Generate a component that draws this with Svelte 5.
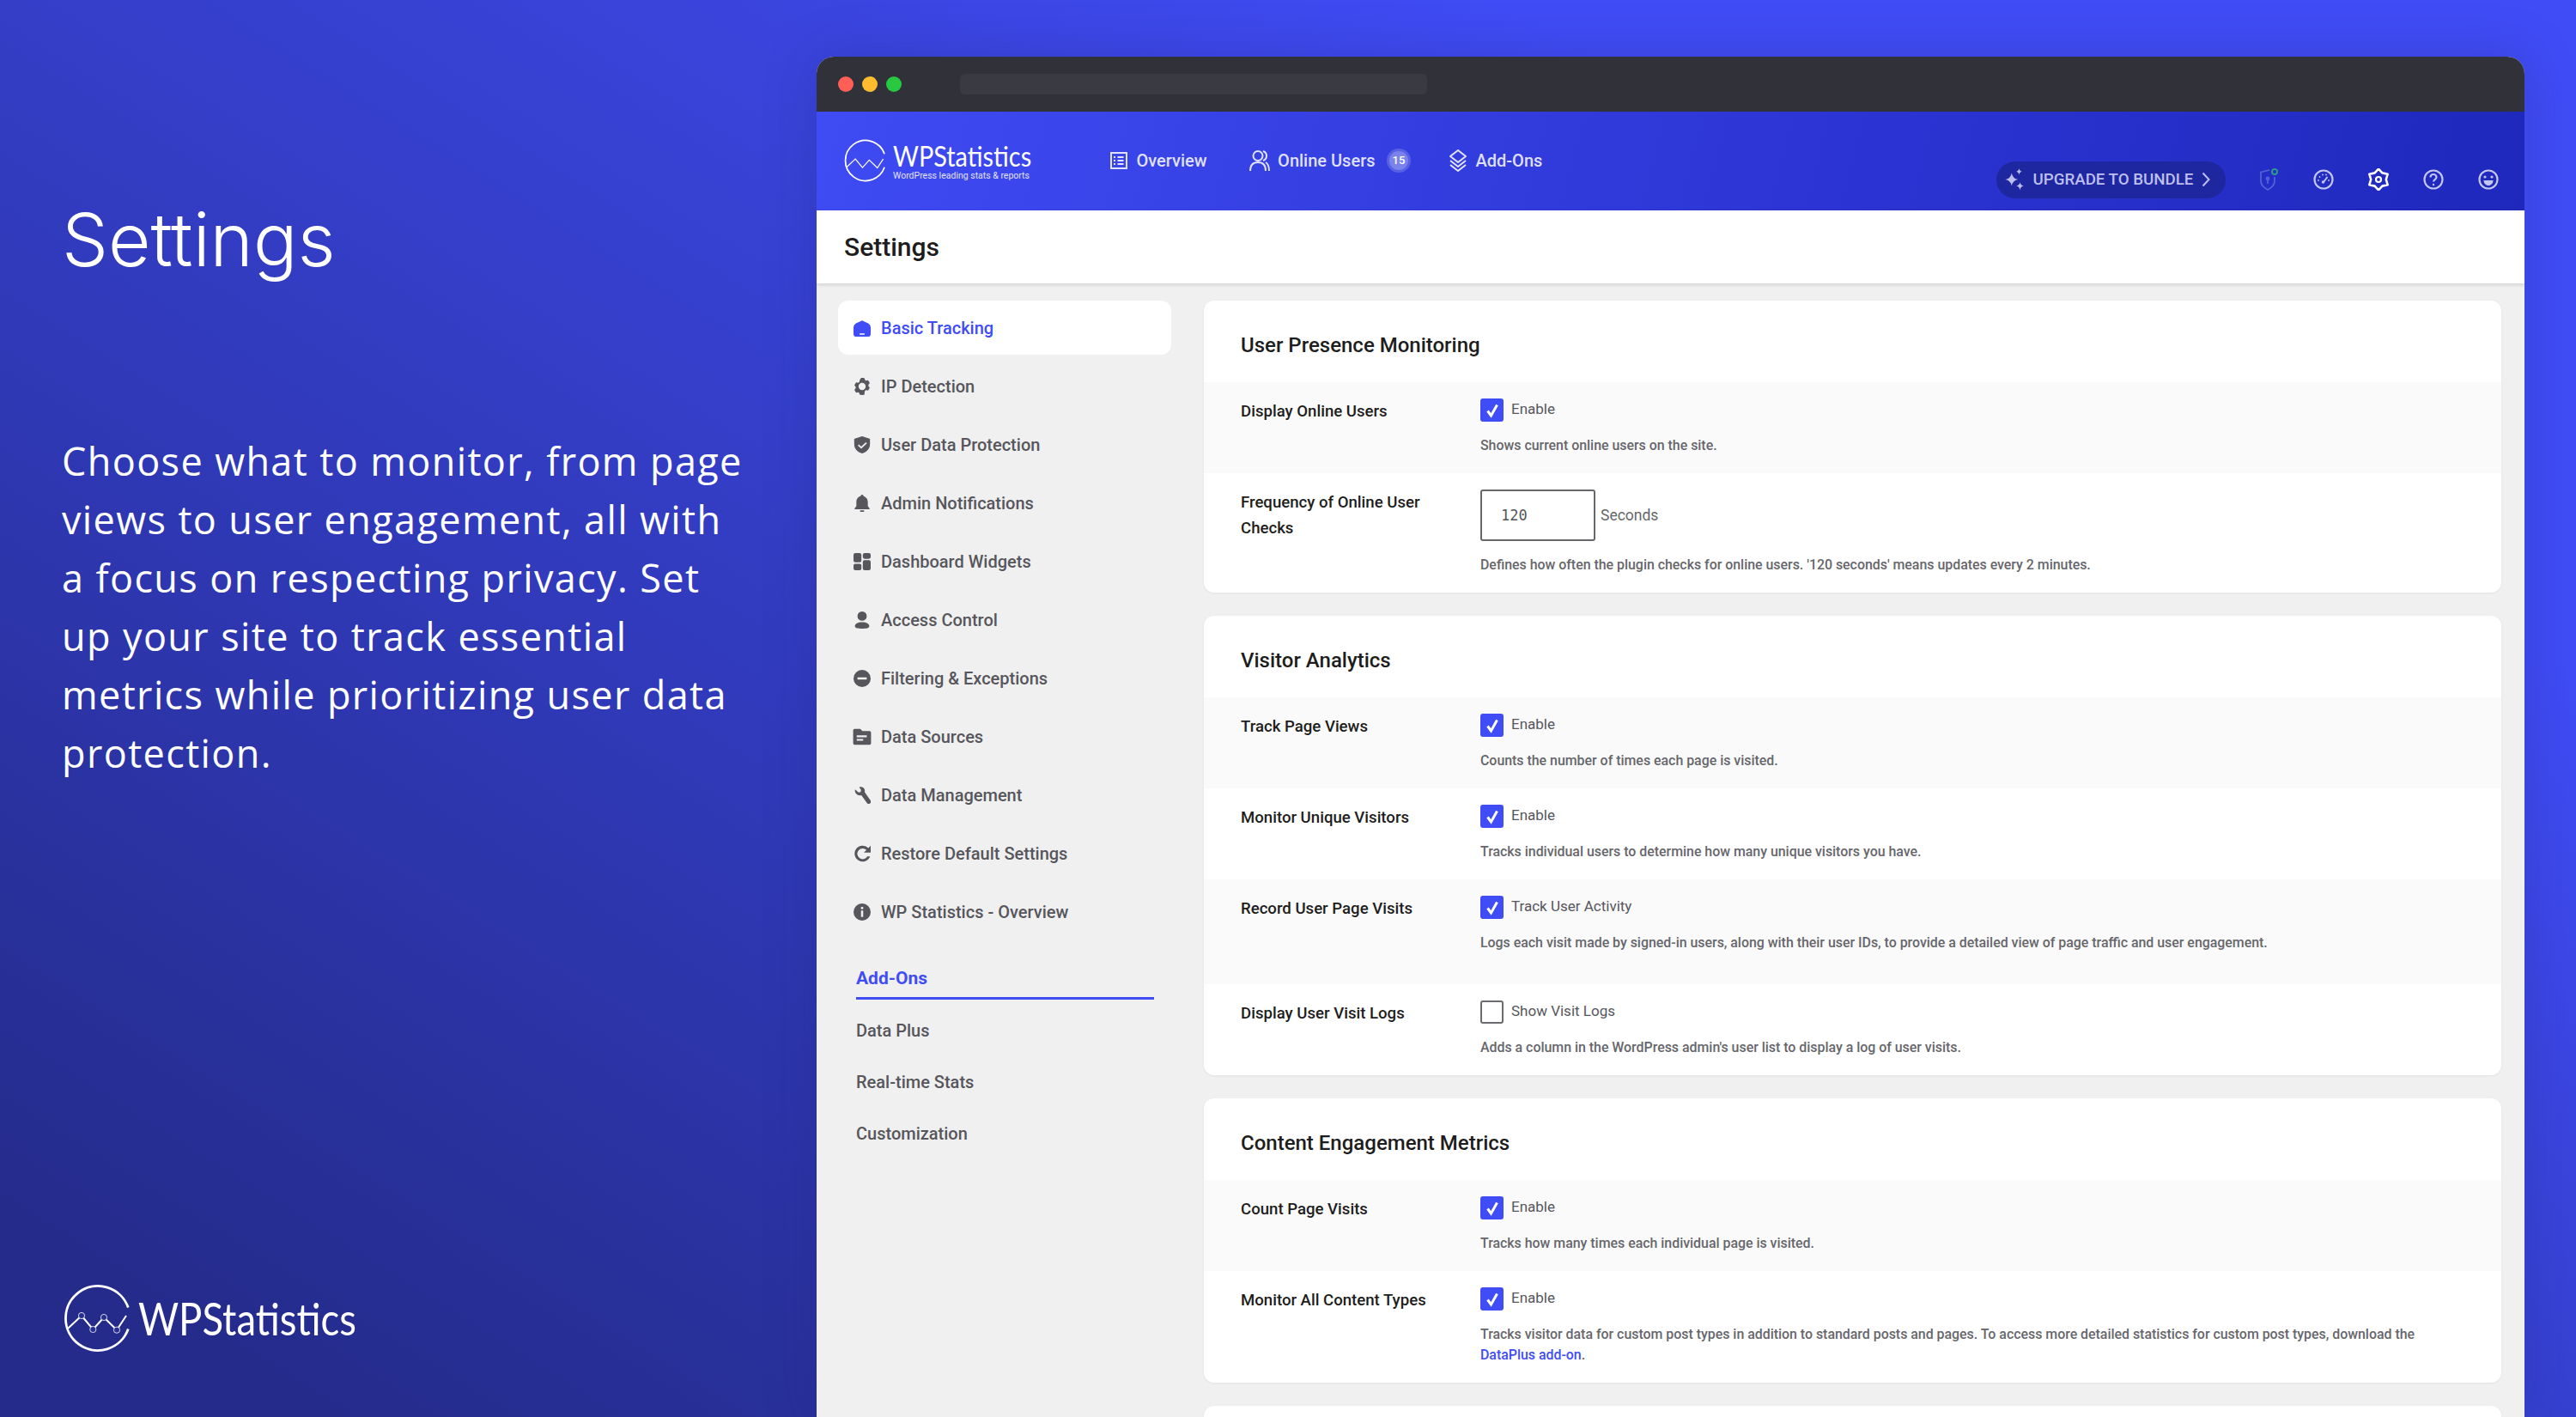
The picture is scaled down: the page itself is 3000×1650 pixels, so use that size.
<script>
  const menu = [
    { name: 'Basic Tracking', icon: 'M12 1.500 20.500 5.500Q24 7.500 24 11V20a4 4 0 0 1-4 4H4a4 4 0 0 1-4-4V11Q0 7.500 3.500 5.500ZM8.500 19.500v1.800h7v-1.800Z', active: true },
    { name: 'IP Detection', icon: 'M12 0c1.200 0 2.300.200 3.400.500l.6 2.500 1.800 1 2.500-.700a12 12 0 0 1 2.400 4.200l-1.800 1.800v2.400l1.800 1.800a12 12 0 0 1-2.400 4.200L17.800 17l-1.800 1-.6 2.500-.100.100L15.400 23.500a12 12 0 0 1-6.800 0L8 21l-1.800-1-2.500.700A12 12 0 0 1 1.300 16.500L3 14.700v-2.400L1.300 10.500A12 12 0 0 1 3.700 6.300L6.200 7 8 6l.6-2.500C9.700 .2 10.800 0 12 0ZM12 7a5 5 0 1 0 0 10 5 5 0 0 0 0-10Z' },
    { name: 'User Data Protection', icon: 'M12 0 23 3.500V11c0 6.500-4.500 11-11 13C5.500 22 1 17.500 1 11V3.500ZM17.200 8.500 10.800 14.500 7.500 11.500 6 13l4.800 4.500 8-7.500Z' },
    { name: 'Admin Notifications', icon: 'M12 0a2 2 0 0 1 2 2.200c3.500 1 6 4 6 8V16l2.500 3.500v1h-21v-1L4 16v-5.800c0-4.200 2.500-7.200 6-8A2 2 0 0 1 12 0ZM9 22h6a3 3 0 0 1-6 0Z' },
    { name: 'Dashboard Widgets', icon: 'M2.500 0h6A2.500 2.500 0 0 1 11 2.500v8A2.500 2.500 0 0 1 8.500 13h-6A2.500 2.500 0 0 1 0 10.500v-8A2.500 2.500 0 0 1 2.500 0ZM15.500 0h6A2.500 2.500 0 0 1 24 2.500v3A2.500 2.500 0 0 1 21.500 8h-6A2.500 2.500 0 0 1 13 5.500v-3A2.500 2.500 0 0 1 15.500 0ZM15.500 10h6a2.500 2.500 0 0 1 2.500 2.500v9a2.500 2.500 0 0 1-2.500 2.500h-6a2.500 2.500 0 0 1-2.500-2.500v-9a2.500 2.500 0 0 1 2.500-2.500ZM2.500 15h6a2.500 2.500 0 0 1 2.500 2.500v4A2.500 2.500 0 0 1 8.500 24h-6A2.500 2.500 0 0 1 0 21.500v-4A2.500 2.500 0 0 1 2.500 15Z' },
    { name: 'Access Control', icon: 'M12 0a6.500 6.500 0 1 1 0 13 6.500 6.500 0 0 1 0-13ZM12 15c6 0 10 2.300 10 5.500S18 24 12 24 2 23.700 2 20.500 6 15 12 15Z' },
    { name: 'Filtering & Exceptions', icon: 'M12 0a12 12 0 1 1 0 24 12 12 0 0 1 0-24ZM5.500 10.500v3h13v-3Z' },
    { name: 'Data Sources', icon: 'M0 3a2 2 0 0 1 2-2h8l3 3h10a2 2 0 0 1 2 2v15a2 2 0 0 1-2 2H2a2 2 0 0 1-2-2ZM5 10v2.500h14V10ZM5 15v2.500h9V15Z', wide: true },
    { name: 'Data Management', icon: 'M8 .5c3-1 6.500.500 7.500 3.500.400 1.300.400 2.500 0 3.600L23.500 19a2.800 2.800 0 0 1-4.500 4L11 12c-3 1-6.500-.500-8-3-1-1.700-1.200-3.500-.8-5L7 8l3-.500.500-3Z' },
    { name: 'Restore Default Settings', icon: 'M24 1v9.500h-9.500l3.600-3.600A7.500 7.500 0 1 0 19.300 16h3.900A11.200 11.200 0 1 1 20.800 4.200Z' },
    { name: 'WP Statistics - Overview', icon: 'M12 0a12 12 0 1 1 0 24 12 12 0 0 1 0-24ZM10.500 10v9h3v-9ZM12 4.500a1.800 1.800 0 1 0 0 3.600 1.800 1.800 0 0 0 0-3.600Z' }
  ];

  const addons = ['Data Plus', 'Real-time Stats', 'Customization'];

  const sections = [
    {
      title: 'User Presence Monitoring',
      rows: [
        { label: 'Display Online Users', check: 'Enable', on: true, desc: 'Shows current online users on the site.' },
        { label: 'Frequency of Online User Checks', input: '120', desc: "Defines how often the plugin checks for online users. '120 seconds' means updates every 2 minutes." }
      ]
    },
    {
      title: 'Visitor Analytics',
      rows: [
        { label: 'Track Page Views', check: 'Enable', on: true, desc: 'Counts the number of times each page is visited.' },
        { label: 'Monitor Unique Visitors', check: 'Enable', on: true, desc: 'Tracks individual users to determine how many unique visitors you have.' },
        { label: 'Record User Page Visits', check: 'Track User Activity', on: true, tall: true, desc: 'Logs each visit made by signed-in users, along with their user IDs, to provide a detailed view of page traffic and user engagement.' },
        { label: 'Display User Visit Logs', check: 'Show Visit Logs', on: false, desc: "Adds a column in the WordPress admin's user list to display a log of user visits." }
      ]
    },
    {
      title: 'Content Engagement Metrics',
      rows: [
        { label: 'Count Page Visits', check: 'Enable', on: true, desc: 'Tracks how many times each individual page is visited.' },
        { label: 'Monitor All Content Types', check: 'Enable', on: true, link: 'DataPlus add-on', desc: 'Tracks visitor data for custom post types in addition to standard posts and pages. To access more detailed statistics for custom post types, download the' }
      ]
    }
  ];

  // six rounded teeth for the settings cog
  const cog = Array.from({ length: 12 }, (_, i) => {
    const a = ((i * 30 - 90) * Math.PI) / 180;
    const r = i % 2 === 0 ? 12.3 : 8.8;
    return `${(13 + r * Math.cos(a)).toFixed(2)},${(13 + r * Math.sin(a)).toFixed(2)}`;
  }).join(' ');
</script>

{#snippet logoMark(size, bg, cls, rings)}
  <svg class={cls} width={size} height={size} viewBox="-40 -40 80 80" fill="none" stroke="#fff">
    <path d="M35.300-12.500A37.500 37.500 0 1 0 35.300 12.500" stroke-width="2.800" />
    <path d="M-35 12-19-3-5.700 13 7-1 22 13.700 33-3" stroke-width="2" />
    {#if rings}
      <g fill={bg} stroke-width="0.800">
        <circle cx="-19" cy="-3" r="3.600" />
        <circle cx="-5.700" cy="13" r="3.600" />
        <circle cx="7" cy="-1" r="3.600" />
        <circle cx="22" cy="13.700" r="3.600" />
      </g>
    {/if}
  </svg>
{/snippet}

<div class="page">
  <section class="intro">
    <h1>Settings</h1>
    <p>Choose what to monitor, from page views to user engagement, all with a focus on respecting privacy. Set up your site to track essential metrics while prioritizing user data protection.</p>
    <div class="brand">
      {@render logoMark(80, '#272e8e', 'brand-mark', true)}
      <span>WPStatistics</span>
    </div>
  </section>

  <section class="browser">
    <div class="titlebar">
      <div class="dots">
        <i class="red"></i><i class="yellow"></i><i class="green"></i>
      </div>
      <div class="address"></div>
    </div>

    <header class="topbar">
      <div class="logo">
        {@render logoMark(50, '#3a46e8', 'logo-mark', false)}
        <div class="logo-text">
          <strong>WPStatistics</strong>
          <small>WordPress leading stats &amp; reports</small>
        </div>
      </div>
      <nav>
        <a href="#overview">
          <svg width="22" height="22" viewBox="0 0 22 22" fill="none" stroke="currentColor" stroke-width="2">
            <rect x="2" y="2" width="18" height="18" />
            <path d="M5 7h2M9.500 7h7M5 11h2M9.500 11h7M5 15h2M9.500 15h7" />
          </svg>
          Overview
        </a>
        <a href="#online" class="online">
          <svg width="24" height="26" viewBox="0 0 24 26" fill="none" stroke="currentColor" stroke-width="2">
            <circle cx="10" cy="7.500" r="5.500" />
            <path d="M1 25c0-7 3-10 9-10s9 3 9 10M16 2c3 1 4 3 4 5.500S19 12 16 13M19 15c2.500 1.500 4 5 4 10" />
          </svg>
          Online Users
          <b class="badge">15</b>
        </a>
        <a href="#addons" class="addons">
          <svg width="22" height="26" viewBox="0 0 22 26" fill="none" stroke="currentColor" stroke-width="2" stroke-linejoin="round">
            <path d="M11 1 20 8 11 15 2 8ZM2 13l9 7 9-7M2 18l9 7 9-7" />
          </svg>
          Add-Ons
        </a>
      </nav>
      <div class="tools">
        <a class="upgrade" href="#upgrade">
          <svg width="24" height="28" viewBox="0 0 22 26" fill="currentColor">
            <path d="M8 6q1 6 7 7-6 1-7 7-1-6-7-7 6-1 7-7ZM16 1q.500 3 3 3.500-2.500.500-3 3.500-.500-3-3-3.500 2.500-.500 3-3.500ZM17 16q.500 3 4 4-3.500.500-4 4.500-.500-4-4-4.500 3.500-1 4-4Z" />
          </svg>
          UPGRADE TO BUNDLE
          <svg width="10" height="20" viewBox="0 0 10 18" fill="none" stroke="currentColor" stroke-width="2"><path d="M1.500 1.500 8.500 9 1.500 16.500" /></svg>
        </a>
        <span class="tool dim">
          <svg width="24" height="28" viewBox="0 0 24 28" fill="none" stroke="currentColor" stroke-width="1.800">
            <path d="M13 3 3 5.500V16c0 4.500 3.500 7.500 8 10 4.500-2.500 8-5.500 8-10V11" />
            <circle cx="11" cy="13" r="1.500" fill="currentColor" />
            <path d="M11 14v5" />
            <circle cx="19" cy="5" r="3" stroke="#2a9a8a" stroke-width="2" />
          </svg>
        </span>
        <span class="tool">
          <svg width="24" height="24" viewBox="0 0 24 24" fill="none" stroke="currentColor" stroke-width="2.200">
            <circle cx="12" cy="12" r="10.500" />
            <path d="M12 15 16.500 9" stroke-width="1.800" />
            <path d="M6 13v.100M7.500 9v.100M11 6.500v.100M18 13v.100M15 6.500v.100" stroke-linecap="round" stroke-width="1.800" />
            <circle cx="11.500" cy="15" r="1.800" fill="currentColor" stroke="none" />
          </svg>
        </span>
        <span class="tool active">
          <svg width="26" height="26" viewBox="0 0 26 26" fill="none" stroke="currentColor" stroke-width="2.600" stroke-linejoin="round">
            <polygon points={cog} />
            <circle cx="13" cy="13" r="3" stroke-width="2.200" />
          </svg>
        </span>
        <span class="tool">
          <svg width="24" height="24" viewBox="0 0 24 24" fill="none" stroke="currentColor" stroke-width="2.200">
            <circle cx="12" cy="12" r="10.500" />
            <path d="M8.500 9.500c0-2 1.500-3.500 3.500-3.500s3.500 1.500 3.500 3.300c0 2.700-3.500 2.700-3.500 5.200" />
            <circle cx="12" cy="18" r="1.200" fill="currentColor" stroke="none" />
          </svg>
        </span>
        <span class="tool">
          <svg width="24" height="24" viewBox="0 0 24 24" fill="none" stroke="currentColor" stroke-width="2.200">
            <circle cx="12" cy="12" r="10.500" />
            <circle cx="8" cy="9" r="1.600" fill="currentColor" stroke="none" />
            <circle cx="16" cy="9" r="1.600" fill="currentColor" stroke="none" />
            <path d="M6.500 13h11c0 3.500-2.500 6-5.500 6s-5.500-2.500-5.500-6Z" fill="currentColor" stroke="none" />
          </svg>
        </span>
      </div>
    </header>

    <div class="page-title"><h2>Settings</h2></div>

    <div class="content">
      <aside>
        <ul class="menu">
          {#each menu as item}
            <li class:active={item.active}>
              <svg width="20" height="20" viewBox={item.wide ? '0 0 25 24' : '0 0 24 24'} class:wide={item.wide} fill="currentColor" fill-rule="evenodd"><path d={item.icon} /></svg>
              {item.name}
            </li>
          {/each}
        </ul>
        <div class="addon-title">Add-Ons</div>
        <ul class="addon-list">
          {#each addons as name}
            <li>{name}</li>
          {/each}
        </ul>
      </aside>

      <main>
        {#each sections as section}
          <article class="card">
            <h3>{section.title}</h3>
            {#each section.rows as row}
              <div class="row" class:tall={row.tall}>
                <div class="label">{row.label}</div>
                <div class="field">
                  {#if row.input}
                    <div class="control">
                      <span class="number">{row.input}</span>
                      <span class="unit">Seconds</span>
                    </div>
                  {:else}
                    <div class="control">
                      <span class="box" class:on={row.on}>
                        {#if row.on}
                          <svg width="18" height="20" viewBox="0 0 18 20" fill="none" stroke="#fff" stroke-width="3"><path d="M3.500 10.500 7.500 16 14.500 3.500" /></svg>
                        {/if}
                      </span>
                      <span class="check-label">{row.check}</span>
                    </div>
                  {/if}
                  <p class="desc">{row.desc}{#if row.link}{' '}<a href="#dataplus">{row.link}</a>.{/if}</p>
                </div>
              </div>
            {/each}
          </article>
        {/each}
        <article class="card stub"></article>
      </main>
    </div>
  </section>
</div>

<style>
  :global(body) {
    margin: 0;
    background: #404cf5;
  }

  .page {
    display: flex;
    width: 3000px;
    height: 1650px;
    overflow: hidden;
    background: linear-gradient(212deg, #404cf5 22%, #242b8a 94%);
    font-family: Roboto, sans-serif;
  }

  .intro {
    box-sizing: border-box;
    width: 951px;
    height: 100%;
    padding: 0 0 75px 74px;
    display: flex;
    flex-direction: column;
    color: #fff;
  }

  h1 {
    margin: 228px 0 0 -2px;
    font: 350 85.500px/102px Inter, sans-serif;
  }

  .intro p {
    margin: 173px 0 0 -2px;
    width: 800px;
    font: 400 45px/68px "Open Sans", sans-serif;
    letter-spacing: 1.380px;
  }

  .brand {
    margin-top: auto;
    display: flex;
    align-items: center;
    gap: 7px;
    font: 400 52px/80px Lato, sans-serif;
  }

  .brand span,
  .logo-text strong {
    transform: scaleX(0.875);
    transform-origin: left center;
    white-space: nowrap;
  }

  .browser {
    width: 1989px;
    height: 1584px;
    margin-top: 66px;
    border-radius: 20px 20px 0 0;
    overflow: hidden;
    background: #f0f0f0;
    box-shadow: 0 0 60px rgba(30, 35, 120, 0.25);
  }

  .titlebar {
    height: 64px;
    background: #31313a;
    display: flex;
    align-items: center;
    padding-left: 25px;
  }

  .dots {
    display: flex;
    gap: 10px;
  }

  .dots i {
    width: 18px;
    height: 18px;
    border-radius: 50%;
  }

  .red { background: #ff5f57; }
  .yellow { background: #febc2e; }
  .green { background: #28c840; }

  .address {
    width: 544px;
    height: 24px;
    margin-left: 68px;
    border-radius: 6px;
    background: #3a3a43;
  }

  .topbar {
    box-sizing: border-box;
    height: 115px;
    position: relative;
    display: flex;
    padding: 32px 0 0 32px;
    background: linear-gradient(105deg, #3f4bf3 0%, #2a33d0 65%, #1f28bc 100%);
    color: #fff;
  }

  .logo {
    display: flex;
    gap: 7px;
    width: 309px;
  }

  .logo-text {
    display: flex;
    flex-direction: column;
    padding-top: 2px;
  }

  .logo-text strong {
    font: 400 33px/34px Lato, sans-serif;
  }

  .logo-text small {
    font-size: 10.500px;
    line-height: 14px;
    opacity: 0.85;
  }

  nav {
    display: flex;
    align-items: center;
    height: 50px;
  }

  nav a {
    display: flex;
    align-items: center;
    gap: 9.500px;
    color: rgba(255, 255, 255, 0.85);
    font-size: 20px;
    font-weight: 500;
    text-decoration: none;
  }

  .online {
    margin-left: 49px;
  }

  .addons {
    margin-left: 47px;
  }

  .badge {
    width: 22px;
    height: 22px;
    margin-left: 7px;
    border-radius: 50%;
    background: #7a82ec;
    box-shadow: 0 0 0 3px rgba(255, 255, 255, 0.18);
    color: #fff;
    font-size: 13px;
    font-weight: 500;
    line-height: 22px;
    text-align: center;
  }

  .tools {
    margin-left: auto;
    padding-right: 10px;
    height: 44px;
    margin-top: 25px;
    display: flex;
    align-items: center;
    color: #c3c6f2;
  }

  .upgrade {
    box-sizing: border-box;
    width: 267px;
    height: 43px;
    padding: 0 18px 0 9px;
    margin-right: 18px;
    display: flex;
    align-items: center;
    justify-content: space-between;
    border-radius: 22px;
    background: #1f27a0;
    color: #bcbfee;
    font-size: 18.700px;
    font-weight: 500;
    text-decoration: none;
  }

  .tool {
    width: 64px;
    display: flex;
    justify-content: center;
  }

  .tool.dim {
    color: #5560d8;
  }

  .tool.active {
    color: #fff;
  }

  .page-title {
    box-sizing: border-box;
    height: 85px;
    padding-left: 32px;
    display: flex;
    align-items: center;
    background: #fff;
    box-shadow: 0 2px 4px rgba(0, 0, 0, 0.12);
    position: relative;
  }

  h2 {
    margin: 0;
    color: #1d1d20;
    font-size: 30px;
    font-weight: 500;
  }

  .content {
    display: flex;
    padding: 20px 27px 0 25px;
  }

  aside {
    width: 388px;
    flex: none;
    margin-right: 38px;
    color: #56565c;
    font-size: 20px;
    font-weight: 500;
  }

  ul {
    list-style: none;
    margin: 0;
    padding: 0;
  }

  .menu {
    display: flex;
    flex-direction: column;
    gap: 5px;
  }

  .menu li {
    height: 63px;
    padding-left: 18px;
    display: flex;
    align-items: center;
    gap: 12px;
    border-radius: 12px;
  }

  .menu li .wide {
    width: 24px;
    margin: 0 -2px;
  }

  .menu li.active {
    background: #fff;
    color: #404cf5;
  }

  .addon-title {
    margin: 24px 20px 0 21px;
    padding: 10px 0 10px;
    border-bottom: 3px solid #404cf5;
    color: #404cf5;
    font-size: 21px;
    font-weight: 700;
    line-height: 24px;
  }

  .addon-list {
    margin-top: 6px;
    padding-left: 21px;
  }

  .addon-list li {
    height: 60px;
    line-height: 60px;
  }

  main {
    flex: 1;
    display: flex;
    flex-direction: column;
    gap: 27px;
  }

  .card {
    background: #fff;
    border-radius: 12px;
    overflow: hidden;
    box-shadow: 0 1px 3px rgba(0, 0, 0, 0.06);
    flex: none;
  }

  .stub {
    height: 60px;
  }

  h3 {
    margin: 0;
    height: 95px;
    padding-left: 43px;
    color: #1d1d20;
    font-size: 24px;
    font-weight: 500;
    line-height: 104px;
  }

  .row {
    display: grid;
    grid-template-columns: 279px 1fr;
    padding: 19px 43px 20px;
  }

  .row:nth-of-type(odd) {
    background: #fafafa;
  }

  .row.tall {
    padding-bottom: 36px;
  }

  .label {
    color: #1d1d20;
    font-size: 18.600px;
    font-weight: 500;
    line-height: 30px;
    width: 240px;
  }

  .control {
    display: flex;
    align-items: center;
  }

  .box {
    box-sizing: border-box;
    width: 27px;
    height: 27px;
    margin-right: 9px;
    display: flex;
    align-items: center;
    justify-content: center;
    border: 2px solid #6b6b70;
    border-radius: 3px;
    background: #fff;
  }

  .box.on {
    border: none;
    background: #404cf5;
  }

  .check-label {
    margin-top: -3px;
    color: #56565c;
    font-size: 17px;
  }

  .number {
    box-sizing: border-box;
    width: 134px;
    height: 60px;
    padding-left: 22px;
    border: 2px solid #66666b;
    border-radius: 3px;
    background: #fff;
    color: #56565c;
    font: 17px/56px "DejaVu Sans Mono", monospace;
  }

  .unit {
    margin-left: 6px;
    color: #66666b;
    font-size: 17.500px;
  }

  .desc {
    margin: 16px 0 0;
    color: #66666b;
    font-size: 15.900px;
    font-weight: 500;
    line-height: 24px;
  }

  .desc a {
    color: #404cf5;
    text-decoration: none;
    white-space: nowrap;
  }
</style>
